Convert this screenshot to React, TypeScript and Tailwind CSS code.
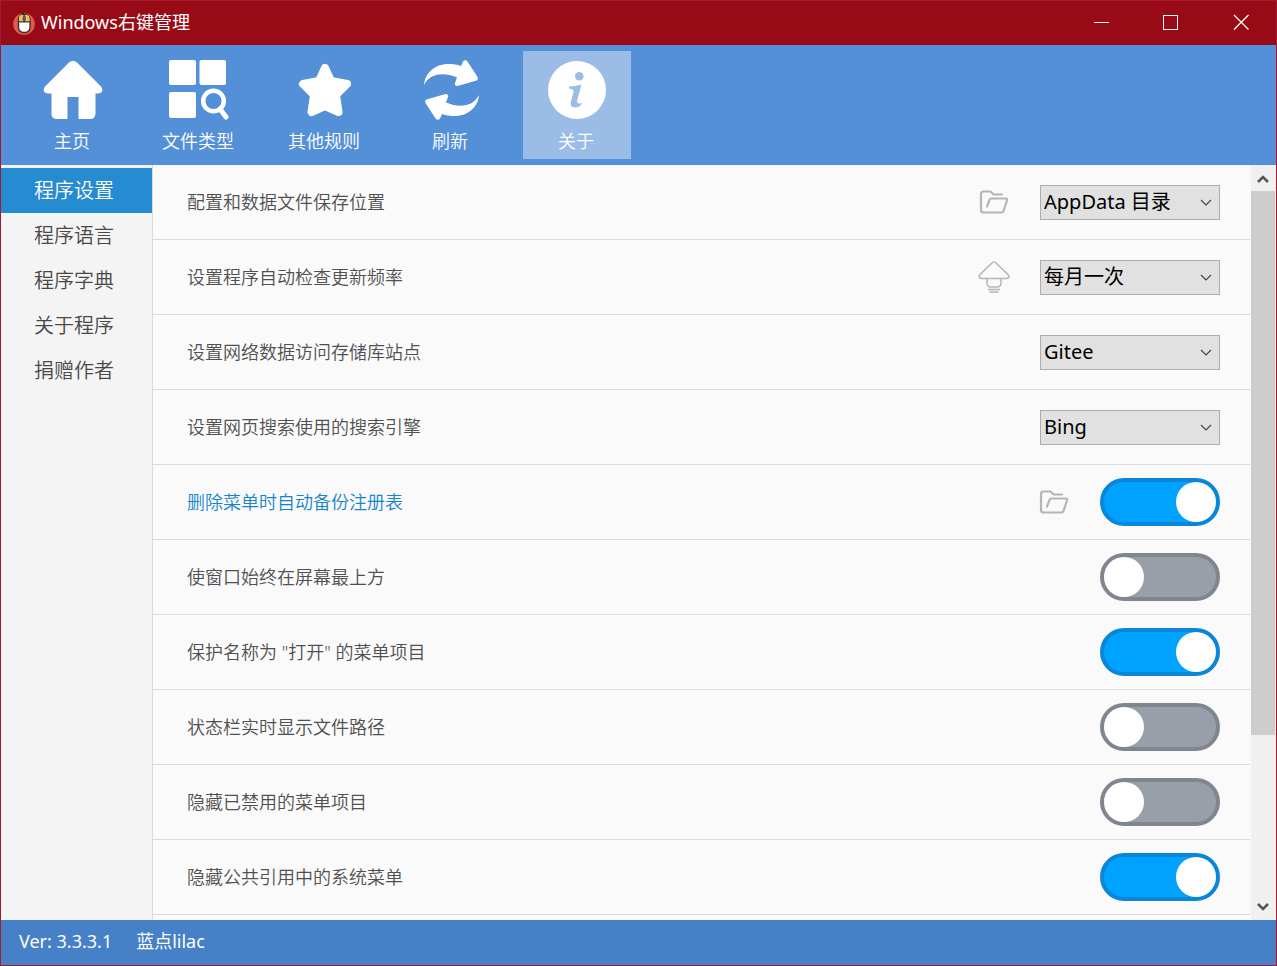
import { useState } from "react";

const HomeIcon = () => (
  <svg viewBox="0 0 60 60" className="size-[60px]" fill="currentColor">
    <path d="M26 2.5Q30 -1 34 2.5L58 26.500Q60 29 59 31.500Q58 33.500 55 33.500H52.500V54Q52 59 47 59H35.500V37H24.500V59H14Q8.500 59 8.500 54V33.500H5Q2 33.500 1 31.500Q0 29 2 26.500Z" />
  </svg>
);

const FileTypeIcon = () => (
  <svg viewBox="0 0 60 60" className="size-[60px]" fill="currentColor">
    <rect x="0" y="0" width="27" height="25" rx="2" />
    <rect x="30.500" y="0" width="26.500" height="25" rx="2" />
    <rect x="0" y="32" width="27" height="26" rx="2" />
    <circle cx="44.500" cy="41" r="10.300" fill="none" stroke="currentColor" strokeWidth="4.500" />
    <path d="M51 49L57 57" stroke="currentColor" strokeWidth="5" strokeLinecap="round" />
  </svg>
);

const StarIcon = () => (
  <svg viewBox="0 0 60 60" className="size-[60px]" fill="currentColor" stroke="currentColor" strokeWidth="8" strokeLinejoin="round">
    <path d="M30 8L36 21L52 24L41 35L43.500 52L30 46L16.500 52L19 35L8 24L24 21Z" />
  </svg>
);

const RefreshIcon = () => (
  <svg viewBox="0 0 60 60" className="size-[60px]" fill="currentColor">
    <path
      id="arrow"
      d="M3 25C4 13 14 4 27 4C32 4 36 4.500 40 6L42 1.500Q44 -1 46.500 1.500L56.500 17Q57.500 19.500 55.500 20.500L36.500 26Q33 26 34 23L36 17.500C23 12 9 13 3 25Z"
    />
    <use href="#arrow" transform="rotate(180 30.500 30)" />
  </svg>
);

const InfoIcon = () => (
  <svg viewBox="0 0 60 60" className="size-[60px]" fill="currentColor">
    <circle cx="30" cy="30" r="29" />
    <g fill="#9bbce7">
      <circle cx="32.300" cy="16.300" r="4.300" />
      <path d="M22 26.500Q28 26.500 34.500 24.500L30.300 40Q29 45 35.500 43Q33 47.500 27.500 47.500Q22.500 47 24 41.500L26.500 32Q27.500 29 22 28.500Z" />
    </g>
  </svg>
);

const FolderIcon = () => (
  <svg viewBox="0 0 32 32" className="size-8" fill="none" stroke="#b5b5b5" strokeWidth="2.200" strokeLinecap="round" strokeLinejoin="round">
    <path d="M24 8.500H15.500L12.500 5.500H5.500Q3 5.500 3 8V24Q3 26.500 5.500 26.500H23.500Q25 26.500 25.500 25L29 14.500Q29.500 12.500 27.500 12.500H13.500Q12 12.500 11.500 14L9 20.500" />
  </svg>
);

const UpdateIcon = () => (
  <svg viewBox="0 0 32 32" className="size-8" fill="none" stroke="#b5b5b5" strokeWidth="1.500" strokeLinecap="round" strokeLinejoin="round">
    <path d="M14.500 1.500Q16 0.300 17.500 1.500L30 13.500Q32 16.500 29 17.500H3Q0 16.500 2 13.500ZM9 17.500V22Q9 26 13 26H19Q23 26 23 22V17.500M10.500 28.500H21.500M12 31H20" />
  </svg>
);

const AppLogo = () => (
  <svg viewBox="0 0 22 24" className="h-6 w-[22px]">
    <circle cx="11" cy="13" r="10.800" fill="#e05a4b" />
    <path d="M11 4Q10.500 1.500 8 1" stroke="#3a2526" strokeWidth="1.500" fill="none" />
    <rect x="5.500" y="3.500" width="11.500" height="18" rx="5" fill="#fff" stroke="#3a2c2c" strokeWidth="1.300" />
    <path d="M6 10.500V7Q6 4 9 4H13.500Q16.500 4 16.500 7V10.500Z" fill="#eac15a" />
    <path d="M5.500 10.800H17M11.200 4V10.500" stroke="#3a2c2c" strokeWidth="1.200" />
    <rect x="10" y="5.500" width="2.500" height="4" rx="1" fill="#666" stroke="#3a2c2c" strokeWidth="0.600" />
  </svg>
);

const tools = [
  { name: "主页", icon: <HomeIcon /> },
  { name: "文件类型", icon: <FileTypeIcon /> },
  { name: "其他规则", icon: <StarIcon /> },
  { name: "刷新", icon: <RefreshIcon /> },
  { name: "关于", icon: <InfoIcon /> },
];

const pages = ["程序设置", "程序语言", "程序字典", "关于程序", "捐赠作者"];

const settings = [
  { id: "path", label: "配置和数据文件保存位置", icon: "folder", options: ["AppData 目录", "程序目录"] },
  { id: "update", label: "设置程序自动检查更新频率", icon: "update", options: ["每月一次", "每周一次"] },
  { id: "repo", label: "设置网络数据访问存储库站点", options: ["Gitee", "Github"] },
  { id: "engine", label: "设置网页搜索使用的搜索引擎", options: ["Bing", "Baidu", "Google"] },
  { id: "backup", label: "删除菜单时自动备份注册表", icon: "folder", on: true, active: true },
  { id: "topmost", label: "使窗口始终在屏幕最上方" },
  { id: "protect", label: '保护名称为 "打开" 的菜单项目', on: true },
  { id: "status", label: "状态栏实时显示文件路径" },
  { id: "disabled", label: "隐藏已禁用的菜单项目" },
  { id: "system", label: "隐藏公共引用中的系统菜单", on: true },
];

const SelectBox = ({ id, options }: any) => (
  <div className="relative h-[35px] w-[180px]">
    <select
      id={id}
      className="h-full w-full appearance-none border border-[#adadad] bg-[#e1e1e1] pl-[3px] text-xl leading-8 font-normal text-black"
    >
      {options.map((o: string) => (
        <option key={o}>{o}</option>
      ))}
    </select>
    <svg viewBox="0 0 12 8" className="pointer-events-none absolute top-[14px] right-2 h-2 w-3" fill="none" stroke="#444" strokeWidth="1.200">
      <path d="M1 1L6 6L11 1" />
    </svg>
  </div>
);

const Toggle = ({ id, on }: any) => (
  <input
    id={id}
    type="checkbox"
    role="switch"
    defaultChecked={on}
    className="h-12 w-[120px] appearance-none rounded-full border-4 border-[#80868f] bg-[#999fa9] before:block before:size-10 before:rounded-full before:bg-white checked:border-[#0a86d8] checked:bg-[#00a2ff] checked:before:ml-auto"
  />
);

const SettingRow = ({ id, label, icon, options, on, active }: any) => (
  <div className="flex h-[75px] shrink-0 items-center gap-[30px] border-b border-[#dadada] pr-[30px] pl-[34px]">
    <label htmlFor={id} className={active ? "flex-1 text-lg text-[#1486cc]" : "flex-1 text-lg text-[#505050]"}>
      {label}
    </label>
    {icon && (
      <button aria-label={icon}>{icon === "folder" ? <FolderIcon /> : <UpdateIcon />}</button>
    )}
    {options ? <SelectBox id={id} options={options} /> : <Toggle id={id} on={on} />}
  </div>
);

const ScrollBar = () => (
  <div className="flex w-[25px] shrink-0 flex-col bg-[#f0f0f0] pr-px">
    <button aria-label="up" className="flex h-[26px] items-center justify-center pt-0.5">
      <svg viewBox="0 0 12 8" className="h-2 w-3" fill="none" stroke="#555" strokeWidth="2.500">
        <path d="M1 7L6 2L11 7" />
      </svg>
    </button>
    <div className="flex-24 bg-[#cdcdcd]" />
    <div className="flex-7" />
    <button aria-label="down" className="flex h-[26px] items-center justify-center">
      <svg viewBox="0 0 12 8" className="h-2 w-3" fill="none" stroke="#555" strokeWidth="2.500">
        <path d="M1 1L6 6L11 1" />
      </svg>
    </button>
  </div>
);

export default function App() {
  const [tool, setTool] = useState("关于");
  const [page, setPage] = useState("程序设置");

  return (
    <div className="flex h-screen flex-col overflow-hidden border border-[#a3182a] bg-[#fafafa] font-['Noto_Sans','Noto_Sans_CJK_SC',sans-serif] font-[350]">
      <header className="flex h-11 shrink-0 items-center bg-[#980b16] pl-3 text-white">
        <AppLogo />
        <h1 className="flex-1 pb-0.5 pl-1.5 text-lg font-normal">Windows右键管理</h1>
        <button aria-label="最小化" className="flex h-full w-[70px] items-center justify-center pb-0.5">
          <svg viewBox="0 0 16 16" className="size-4" stroke="currentColor">
            <path d="M1 8.500H16" />
          </svg>
        </button>
        <button aria-label="最大化" className="flex h-full w-[70px] items-center justify-center pb-0.5">
          <svg viewBox="0 0 16 16" className="size-4" stroke="currentColor" fill="none">
            <rect x="0.500" y="1.500" width="14" height="14" />
          </svg>
        </button>
        <button aria-label="关闭" className="flex h-full w-[70px] items-center justify-center pb-0.5">
          <svg viewBox="0 0 16 16" className="size-4" stroke="currentColor" strokeWidth="1.200">
            <path d="M1 1L15.500 15.500M15.500 1L1 15.500" />
          </svg>
        </button>
      </header>

      <nav className="flex h-[120px] shrink-0 items-center gap-[18px] bg-[#5490d7] pl-[18px] text-white">
        {tools.map((t) => (
          <button
            key={t.name}
            onClick={() => setTool(t.name)}
            className={
              tool === t.name
                ? "flex size-[108px] flex-col items-center gap-[9px] bg-[#9bbce7] pt-[9px]"
                : "flex size-[108px] flex-col items-center gap-[9px] pt-[9px]"
            }
          >
            {t.icon}
            <span className="pr-0.5 text-lg leading-6">{t.name}</span>
          </button>
        ))}
      </nav>

      <main className="flex min-h-0 flex-1">
        <aside className="flex w-[152px] shrink-0 flex-col border-r border-[#dadada] bg-[#f4f4f4] pt-[3px]">
          {pages.map((p) => (
            <button
              key={p}
              onClick={() => setPage(p)}
              className={
                page === p
                  ? "h-[45px] bg-[#268cd2] pl-[33px] text-left text-xl text-white"
                  : "h-[45px] pl-[33px] text-left text-xl text-[#484848]"
              }
            >
              {p}
            </button>
          ))}
        </aside>
        <section className="flex flex-1 flex-col overflow-hidden pr-px">
          {settings.map((s) => (
            <SettingRow key={s.id} {...s} />
          ))}
        </section>
        <ScrollBar />
      </main>

      <footer className="flex h-[45px] shrink-0 items-center gap-6 bg-[#4680c7] pb-[3px] pl-[18px] text-lg font-normal text-white">
        <span>Ver: 3.3.3.1</span>
        <span>蓝点lilac</span>
      </footer>
    </div>
  );
}
